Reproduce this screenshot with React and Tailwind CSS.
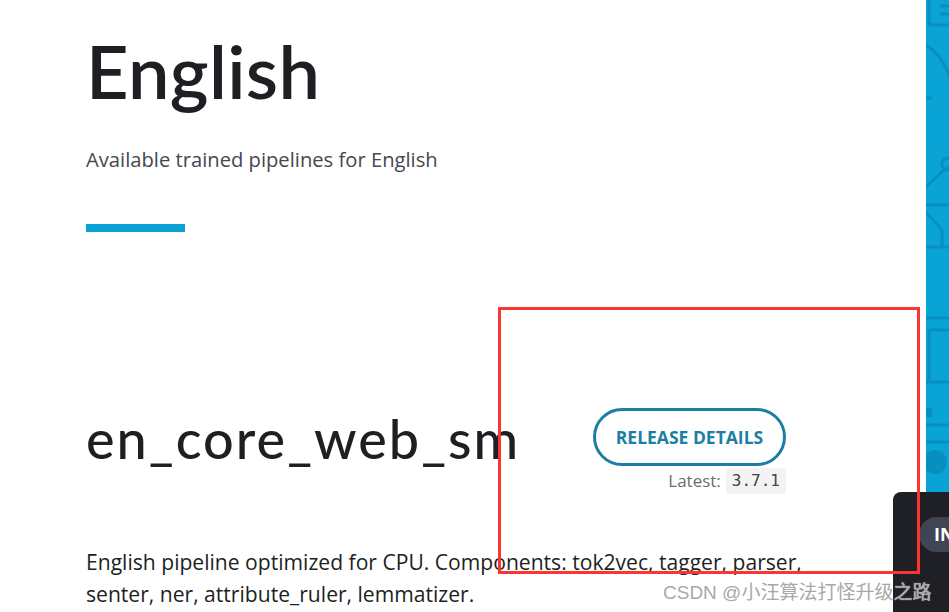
export default function App() {
  return (
    <div className="relative w-[949px] h-[612px] overflow-hidden bg-white flex">
      <div className="flex-1 pl-[86px] pt-[23px]">
        <h1 className="text-[74px] leading-[96px] font-semibold text-[#1e1f23] tracking-[0.3px]" style={{ fontFamily: '"Lato", "Inter", sans-serif' }}>
          English
        </h1>
        <p className="mt-[26px] text-[20.2px] leading-[28px] text-[#45484f]" style={{ fontFamily: '"Open Sans", "Noto Sans", sans-serif' }}>
          Available trained pipelines for English
        </p>
        <div className="mt-[51px] w-[99px] h-[8px] bg-[#09a3d5]" />
        <div className="mt-[176px] w-[700px] flex items-start justify-between">
          <h2 className="mt-[-1px] text-[54px] leading-[64px] font-medium text-[#1e1f23] tracking-[2px]" style={{ fontFamily: '"Lato", "Inter", sans-serif' }}>
            en_core_web_sm
          </h2>
          <div className="flex flex-col items-end">
            <div className="w-[193px] h-[58px] rounded-full border-[3px] border-[#1a7fa3] flex items-center justify-center text-[17.5px] font-bold text-[#1a7fa3]" style={{ fontFamily: '"Open Sans", "Noto Sans", sans-serif' }}>
              RELEASE DETAILS
            </div>
            <div className="mt-[2px] flex items-center gap-[5px]">
              <span className="text-[17px] text-[#6b6e74]" style={{ fontFamily: '"Open Sans", "Noto Sans", sans-serif' }}>Latest:</span>
              <span className="px-[6px] h-[26px] flex items-center rounded-[3px] bg-[#f3f3f3] text-[16px] text-[#444]" style={{ fontFamily: '"DejaVu Sans Mono", monospace' }}>3.7.1</span>
            </div>
          </div>
        </div>
        <p className="mt-[52px] w-[760px] text-[21.1px] leading-[32px] text-[#1e1f23]" style={{ fontFamily: '"Open Sans", "Noto Sans", sans-serif' }}>
          English pipeline optimized for CPU. Components: tok2vec, tagger, parser, senter, ner, attribute_ruler, lemmatizer.
        </p>
      </div>
      <div className="w-[23px] h-full bg-[#09a3d5] shrink-0">
        <svg width="23" height="612" viewBox="0 0 23 612" fill="none" stroke="#0790bf" strokeWidth="3">
          <path d="M3 -2 V22 Q3 25 6 25 H24" />
          <path d="M14 6 H24 M14 14 H24" />
          <path d="M0 45 Q16 55 24 78" />
          <path d="M0 98 H6" />
          <path d="M0 187 L18 170 L24 166" />
          <circle cx="22" cy="164" r="6" />
          <path d="M0 205 H24" />
          <path d="M0 212 L16 230 V248" />
          <path d="M0 247 H24" />
          <path d="M0 318 H24" />
          <path d="M3 330 H24 M3 330 V382 M0 382 H24" />
          <path d="M0 425 H24 M0 442 H24" />
          <rect x="0" y="408" width="6" height="9" fill="#0790bf" stroke="none" />
          <circle cx="9" cy="462" r="12" fill="#0790bf" stroke="none" />
        </svg>
      </div>
      <div className="absolute left-[893px] top-[492px] w-[80px] h-[130px] rounded-tl-[8px] bg-[#1e2025]">
        <div className="absolute left-[26px] top-[25px] h-[35px] w-[60px] rounded-full bg-[#3f4552] flex items-center pl-[15px] text-[18px] font-bold text-white" style={{ fontFamily: '"Open Sans", sans-serif' }}>
          IN
        </div>
      </div>
      <div className="absolute left-[498px] top-[307px] w-[422px] h-[267px] border-[3px] border-[#fb3434] pointer-events-none" />
      <div className="absolute left-[663px] top-[579px] text-[19px] text-[#a8a8a8] whitespace-nowrap" style={{ fontFamily: '"Liberation Sans", "Noto Sans CJK SC", sans-serif', textShadow: '0 0 1px #fff' }}>
        CSDN @小汪算法打怪升级之路
      </div>
    </div>
  );
}
